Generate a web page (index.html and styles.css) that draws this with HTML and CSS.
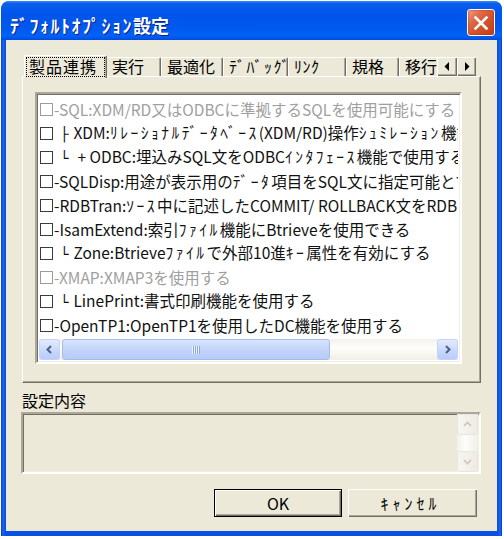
FILE: index.html
```html
<!DOCTYPE html>
<html lang="ja">
<head>
<meta charset="utf-8">
<title>ﾃﾞﾌｫﾙﾄｵﾌﾟｼｮﾝ設定</title>
<link rel="stylesheet" href="styles.css">
</head>
<body>
<div class="window">
  <div class="titlebar">
    <span class="title"><span class="thk">ﾃﾞﾌｫﾙﾄｵﾌﾟｼｮﾝ</span>設定</span>
    <div class="close">
      <svg width="16" height="16" viewBox="0 0 16 16"><path d="M2.5 2.5 L13.5 13.5 M13.5 2.5 L2.5 13.5" stroke="#fff" stroke-width="2.6" stroke-linecap="square"/></svg>
    </div>
  </div>
  <div class="client">
    <div class="tabs">
      <div class="tab-strip">
        <div class="tab sel w1"><span class="focus">製品連携</span></div>
        <div class="tab w2">実行</div>
        <div class="tab w3">最適化</div>
        <div class="tab w4"><span class="hk">ﾃﾞﾊﾞｯｸﾞ</span></div>
        <div class="tab w5"><span class="hk">ﾘﾝｸ</span></div>
        <div class="tab w6">規格</div>
        <div class="tab w7">移行</div>
      </div>
      <div class="tab-arrows">
        <div class="tarrow"><svg width="8" height="9" viewBox="0 0 8 9"><path d="M6 0 L6 9 L1.5 4.5 Z" fill="#000"/></svg></div>
        <div class="tarrow"><svg width="8" height="9" viewBox="0 0 8 9"><path d="M2 0 L2 9 L6.5 4.5 Z" fill="#000"/></svg></div>
      </div>
    </div>
    <div class="panel">
      <div class="listbox">
        <div class="rows">
          <div class="row dis"><span class="cb"></span><span class="t">-SQL:XDM/RD又はODBCに準拠するSQLを使用可能にする</span></div>
          <div class="row"><span class="cb"></span><span class="t"><span class="bx">├</span>XDM:<span class="hk">ﾘﾚｰｼｮﾅﾙﾃﾞｰﾀﾍﾞｰｽ</span>(XDM/RD)操作<span class="hk">ｼｭﾐﾚｰｼｮﾝ</span>機能</span></div>
          <div class="row"><span class="cb"></span><span class="t"><span class="bx wide">└</span>+ ODBC:埋込みSQL文をODBC<span class="hk">ｲﾝﾀﾌｪｰｽ</span>機能で使用する</span></div>
          <div class="row"><span class="cb"></span><span class="t">-SQLDisp:用途が表示用の<span class="hk">ﾃﾞｰﾀ</span>項目をSQL文に指定可能とする</span></div>
          <div class="row"><span class="cb"></span><span class="t">-RDBTran:<span class="hk">ｿｰｽ</span>中に記述したCOMMIT/ ROLLBACK文をRDBに発行する</span></div>
          <div class="row"><span class="cb"></span><span class="t">-IsamExtend:索引<span class="hk">ﾌｧｲﾙ</span>機能にBtrieveを使用できる</span></div>
          <div class="row"><span class="cb"></span><span class="t"><span class="bx">└</span>Zone:Btrieve<span class="hk">ﾌｧｲﾙ</span>で外部10進<span class="hk">ｷｰ</span>属性を有効にする</span></div>
          <div class="row dis"><span class="cb"></span><span class="t">-XMAP:XMAP3を使用する</span></div>
          <div class="row"><span class="cb"></span><span class="t"><span class="bx">└</span>LinePrint:書式印刷機能を使用する</span></div>
          <div class="row"><span class="cb"></span><span class="t">-OpenTP1:OpenTP1を使用したDC機能を使用する</span></div>
        </div>
        <div class="hscroll">
          <div class="sbtn"><svg width="9" height="9" viewBox="0 0 9 9"><path d="M6 1 L2.5 4.5 L6 8" fill="none" stroke="#4D6185" stroke-width="2"/></svg></div>
          <div class="thumb"><span class="grip"></span></div>
          <div class="track"></div>
          <div class="sbtn"><svg width="9" height="9" viewBox="0 0 9 9"><path d="M3 1 L6.5 4.5 L3 8" fill="none" stroke="#4D6185" stroke-width="2"/></svg></div>
        </div>
      </div>
    </div>
    <div class="label">設定内容</div>
    <div class="memo">
      <div class="vscroll">
        <div class="vbtn"><svg width="9" height="9" viewBox="0 0 9 9"><path d="M1 6 L4.5 2.5 L8 6" fill="none" stroke="#C9C7BA" stroke-width="1.6"/></svg></div>
        <div class="vtrack"></div>
        <div class="vbtn"><svg width="9" height="9" viewBox="0 0 9 9"><path d="M1 3 L4.5 6.5 L8 3" fill="none" stroke="#C9C7BA" stroke-width="1.6"/></svg></div>
      </div>
    </div>
    <div class="buttons">
      <button class="btn def">OK</button>
      <button class="btn cancel"><span class="hk">ｷｬﾝｾﾙ</span></button>
    </div>
  </div>
</div>
</body>
</html>
```

FILE: styles.css
```css
* { box-sizing: border-box; }
body {
  margin: 0;
  background: #fff;
  font-family: "Noto Sans CJK JP", sans-serif;
}
.window {
  margin: 1px 0 0 1px;
  width: 501px;
  height: 535px;
  border-radius: 8px 8px 0 0;
  background: linear-gradient(to right, #0831D9, #166AEE 2px, #0B50E2 4px, #0B50E2 calc(100% - 4px), #166AEE calc(100% - 2px), #0831D9);
  display: flex;
  flex-direction: column;
  overflow: hidden;
}
.titlebar {
  height: 39px;
  flex: none;
  display: flex;
  align-items: center;
  justify-content: space-between;
  padding: 4px 7px 0 9px;
  border-radius: 8px 8px 0 0;
  background: linear-gradient(to bottom, #3C8CF8 0%, #0A5FEE 6%, #0055EA 35%, #0058EE 70%, #0362F5 88%, #0059F0 94%, #0049DF 100%);
}
.title {
  color: #fff;
  font-size: 18px;
  font-weight: bold;
  line-height: 20px;
  text-shadow: 1px 1px 0 #0A1F8F;
  padding-top: 4px;
}
.thk { letter-spacing: 1.5px; }
.close {
  width: 28px;
  height: 27px;
  border: 1px solid #fff;
  border-radius: 3px;
  background: linear-gradient(135deg, #F0A08A 0%, #E06A48 30%, #D2512B 60%, #C23D16 100%);
  display: flex;
  align-items: center;
  justify-content: center;
  box-shadow: inset 0 0 2px #A52C0B;
}
.client {
  flex: 1;
  margin: 0 5px 5px;
  background: #ECE9D8;
  font-size: 16px;
  color: #000;
}
.hk { letter-spacing: 2.5px; }
/* tabs */
.tabs {
  display: flex;
  margin-top: 15px;
  height: 23px;
  padding-left: 18px;
  position: relative;
  z-index: 2;
}
.tab-strip {
  display: flex;
  align-items: flex-end;
  width: 413px;
  height: 23px;
  overflow: hidden;
}
.tab {
  flex: none;
  height: 19px;
  margin-bottom: 2px;
  line-height: 17px;
  padding-left: 5px;
  white-space: nowrap;
  border-top: 1px solid #fff;
  border-left: 1px solid #fff;
  border-right: 1px solid #716F64;
  box-shadow: inset -1px 0 #ACA899;
  border-radius: 2px 2px 0 0;
  background: #ECE9D8;
}
.tab.sel {
  height: 23px;
  margin-bottom: 0;
  padding: 2px 2px 0 2px;
  line-height: 17px;
}
.focus {
  display: block;
  outline: 1px dotted #000;
  outline-offset: 0;
  padding: 0 2px;
  height: 18px;
  letter-spacing: 1px;
}
.tab.sel + .tab { border-left: none; }
.w1 { width: 83px; }
.w2 { width: 54px; }
.w3 { width: 62px; }
.w4 { width: 65px; }
.w5 { width: 58px; }
.w6 { width: 53px; }
.w7 { width: 60px; }
.w4 .hk { letter-spacing: 1.5px; }
.w5 .hk { letter-spacing: 0.5px; }
.tab-arrows {
  display: flex;
  margin-top: 2px;
  height: 19px;
}
.tarrow {
  width: 20px;
  height: 19px;
  background: #ECE9D8;
  display: flex;
  align-items: center;
  justify-content: center;
  box-shadow: inset 1px 1px #fff, inset -1px -1px #716F64, inset -2px -2px #ACA899;
}
.tarrow + .tarrow { width: 19px; }
/* panel */
.panel {
  margin: -2px 0 0 16px;
  width: 459px;
  height: 307px;
  border-top: 1px solid #fff;
  border-left: 1px solid #fff;
  border-right: 1px solid #716F64;
  border-bottom: 1px solid #716F64;
  box-shadow: inset -1px -1px #ACA899;
  padding: 15px 0 0 12px;
  position: relative;
  z-index: 1;
}
.listbox {
  width: 427px;
  height: 272px;
  background: #fff;
  border: 2px solid;
  border-color: #ACA899 #fff #fff #ACA899;
  box-shadow: inset 1px 1px #716F64, inset -1px -1px #F1EFE2;
  padding: 2px;
  display: flex;
  flex-direction: column;
}
.rows {
  height: 243px;
  overflow: hidden;
  padding-top: 1px;
}
.row {
  height: 24px;
  display: flex;
  align-items: center;
  padding-left: 1px;
  white-space: nowrap;
  line-height: 16px;
  font-size: 15.5px;
  color: #111;
}
.cb {
  flex: none;
  width: 13px;
  height: 13px;
  border: 1px solid #3C3C3C;
  background: #fff;
}
.t { padding-left: 1px; }
.row.dis { color: #A0A0A0; }
.row.dis .cb { border-color: #9C9C9C; }
.bx {
  font-family: "DejaVu Sans", sans-serif;
  font-size: 14px;
  margin: 0 5px 0 6px;
}
.bx.wide { margin-right: 9px; }
/* horizontal scroll */
.hscroll {
  height: 21px;
  display: flex;
  background: linear-gradient(to bottom, #F3F1EC, #FEFEFB 40%, #F0EFE7);
}
.sbtn {
  flex: none;
  width: 21px;
  height: 21px;
  border-radius: 3px;
  border: 1px solid #C3D3FD;
  background: linear-gradient(to bottom, #E3EBFE, #C6D6FC 60%, #B9CCF8);
  display: flex;
  align-items: center;
  justify-content: center;
}
.thumb {
  flex: none;
  width: 268px;
  margin-left: 2px;
  height: 21px;
  border-radius: 3px;
  border: 1px solid #A4BCF0;
  background: linear-gradient(to bottom, #D8E4FE, #C3D4FB 50%, #B7CBF8);
  display: flex;
  align-items: center;
  justify-content: center;
}
.grip {
  width: 8px;
  height: 8px;
  background: repeating-linear-gradient(to right, #EEF4FE 0 1px, #8CA6E8 1px 2px);
}
.track { flex: 1; }
/* label + memo */
.label {
  margin: 9px 0 0 16px;
  line-height: 16px;
  height: 16px;
}
.memo {
  margin: 4px 0 0 15px;
  width: 460px;
  height: 62px;
  border: 2px solid;
  border-color: #ACA899 #fff #fff #ACA899;
  box-shadow: inset 1px 1px #716F64, inset -1px -1px #F1EFE2;
  display: flex;
  justify-content: flex-end;
  padding-right: 1px;
}
.vscroll {
  width: 21px;
  height: 100%;
  display: flex;
  flex-direction: column;
  background: linear-gradient(to right, #F3F1EC, #FEFEFB 40%, #F0EFE7);
}
.vbtn {
  height: 21px;
  border-radius: 3px;
  border: 1px solid #E8E6DC;
  background: linear-gradient(to right, #F7F6F1, #EDEBE3);
  display: flex;
  align-items: center;
  justify-content: center;
}
.vtrack { flex: 1; }
/* buttons */
.buttons {
  display: flex;
  justify-content: flex-end;
  gap: 6px;
  margin-top: 15px;
  padding-right: 20px;
}
.btn {
  height: 28px;
  font-family: "Noto Sans CJK JP", sans-serif;
  font-size: 16px;
  color: #000;
  background: #ECE9D8;
  border: none;
  padding: 0;
  box-shadow: inset 1px 1px #fff, inset -1px -1px #716F64, inset -2px -2px #ACA899;
}
.btn.def {
  width: 128px;
  border: 1px solid #000;
  box-shadow: inset 1px 1px #fff, inset -1px -1px #716F64, inset -2px -2px #ACA899;
}
.btn.cancel { width: 129px; padding-right: 8px; }
.btn.cancel .hk { letter-spacing: 4px; margin-right: -4px; }
```
